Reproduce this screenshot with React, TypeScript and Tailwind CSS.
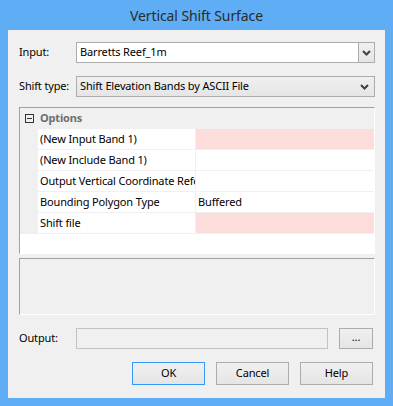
import React from "react";

const FONT = "font-['Segoe_UI','Noto_Sans','Open_Sans',sans-serif]";

function Chevron() {
  return (
    <svg width="9" height="6" viewBox="0 0 9 6" className="block">
      <path d="M1 1 L4.5 4.5 L8 1" fill="none" stroke="#404040" strokeWidth="2" />
    </svg>
  );
}

interface PropRowProps {
  label: string;
  value?: string;
  required?: boolean;
}

function PropRow({ label, value, required }: PropRowProps) {
  return (
    <div className="flex h-[21px] border-b border-[#f0f0f0]">
      <div className="w-[18px] shrink-0 bg-[#f0f0f0]" />
      <div className="flex w-[158px] shrink-0 items-center overflow-hidden whitespace-nowrap border-r border-[#f0f0f0] bg-white pl-[2px]">
        {label}
      </div>
      <div
        className={`flex flex-1 items-center whitespace-nowrap pl-[2px] ${
          required ? "bg-[#fddcdc]" : "bg-white"
        }`}
      >
        {value}
      </div>
    </div>
  );
}

function DialogButton({ label, primary }: { label: string; primary?: boolean }) {
  return (
    <button
      className={`flex h-[23px] w-[73px] items-center justify-center border bg-gradient-to-b from-[#f0f0f0] to-[#e5e5e5] text-black ${
        primary ? "border-[#3399ff]" : "border-[#acacac]"
      }`}
    >
      {label}
    </button>
  );
}

export default function App() {
  return (
    <div
      className={`flex h-[406px] w-[393px] flex-col bg-[#5fadf5] ${FONT} text-[11px] tracking-[-0.15px] text-black`}
    >
      <div className="flex h-[30px] shrink-0 items-center justify-center pt-[1px] text-[14px] tracking-[-0.1px] text-[#2b2b2b]">
        Vertical Shift Surface
      </div>
      <div className="mx-[8px] mb-[8px] flex flex-1 flex-col bg-[#f0f0f0] pl-[11px] pr-[10px]">
        <div className="mt-[12px] flex h-[21px] items-center">
          <span className="w-[57px] shrink-0">Input:</span>
          <div className="flex h-full flex-1 border border-[#acacac] bg-white">
            <div className="flex flex-1 items-center pl-[3px]">Barretts Reef_1m</div>
            <div className="flex w-[16px] items-center justify-center border-l border-[#acacac] bg-gradient-to-b from-[#f0f0f0] to-[#e5e5e5]">
              <Chevron />
            </div>
          </div>
        </div>

        <div className="mt-[13px] flex h-[21px] items-center">
          <span className="w-[57px] shrink-0">Shift type:</span>
          <div className="flex h-full flex-1 items-center border border-[#acacac] bg-gradient-to-b from-[#f0f0f0] to-[#e5e5e5] pl-[3px] pr-[5px]">
            <span className="flex-1">Shift Elevation Bands by ASCII File</span>
            <Chevron />
          </div>
        </div>

        <div className="mt-[10px] flex h-[147px] flex-col border-b border-l border-r border-t border-b-white border-l-[#a0a0a0] border-r-white border-t-[#a0a0a0] bg-white">
          <div className="flex h-[21px] items-center bg-[#f0f0f0]">
            <div className="flex w-[18px] shrink-0 justify-center">
              <div className="relative h-[9px] w-[9px] border border-[#333]">
                <div className="absolute left-[1px] top-[3px] h-[1px] w-[5px] bg-[#333]" />
              </div>
            </div>
            <span className="pl-[2px] font-bold text-[#6d6d6d]">Options</span>
          </div>
          <PropRow label="(New Input Band 1)" required />
          <PropRow label="(New Include Band 1)" />
          <PropRow label="Output Vertical Coordinate Reference" />
          <PropRow label="Bounding Polygon Type" value="Buffered" />
          <PropRow label="Shift file" required />
        </div>

        <div className="mt-[4px] h-[57px] border border-b-white border-l-[#a0a0a0] border-r-white border-t-[#a0a0a0]" />

        <div className="mt-[13px] flex h-[21px] items-center">
          <span className="w-[57px] shrink-0">Output:</span>
          <div className="h-full w-[252px] border border-[#c3c3c3] bg-[#f0f0f0]" />
          <button className="ml-[11px] flex h-[21px] w-[34px] items-center justify-center border border-[#acacac] bg-gradient-to-b from-[#f0f0f0] to-[#e5e5e5] pb-[3px]">
            ...
          </button>
        </div>

        <div className="mt-[13px] flex justify-end gap-[11px] pr-[2px]">
          <DialogButton label="OK" primary />
          <DialogButton label="Cancel" />
          <DialogButton label="Help" />
        </div>
      </div>
    </div>
  );
}
